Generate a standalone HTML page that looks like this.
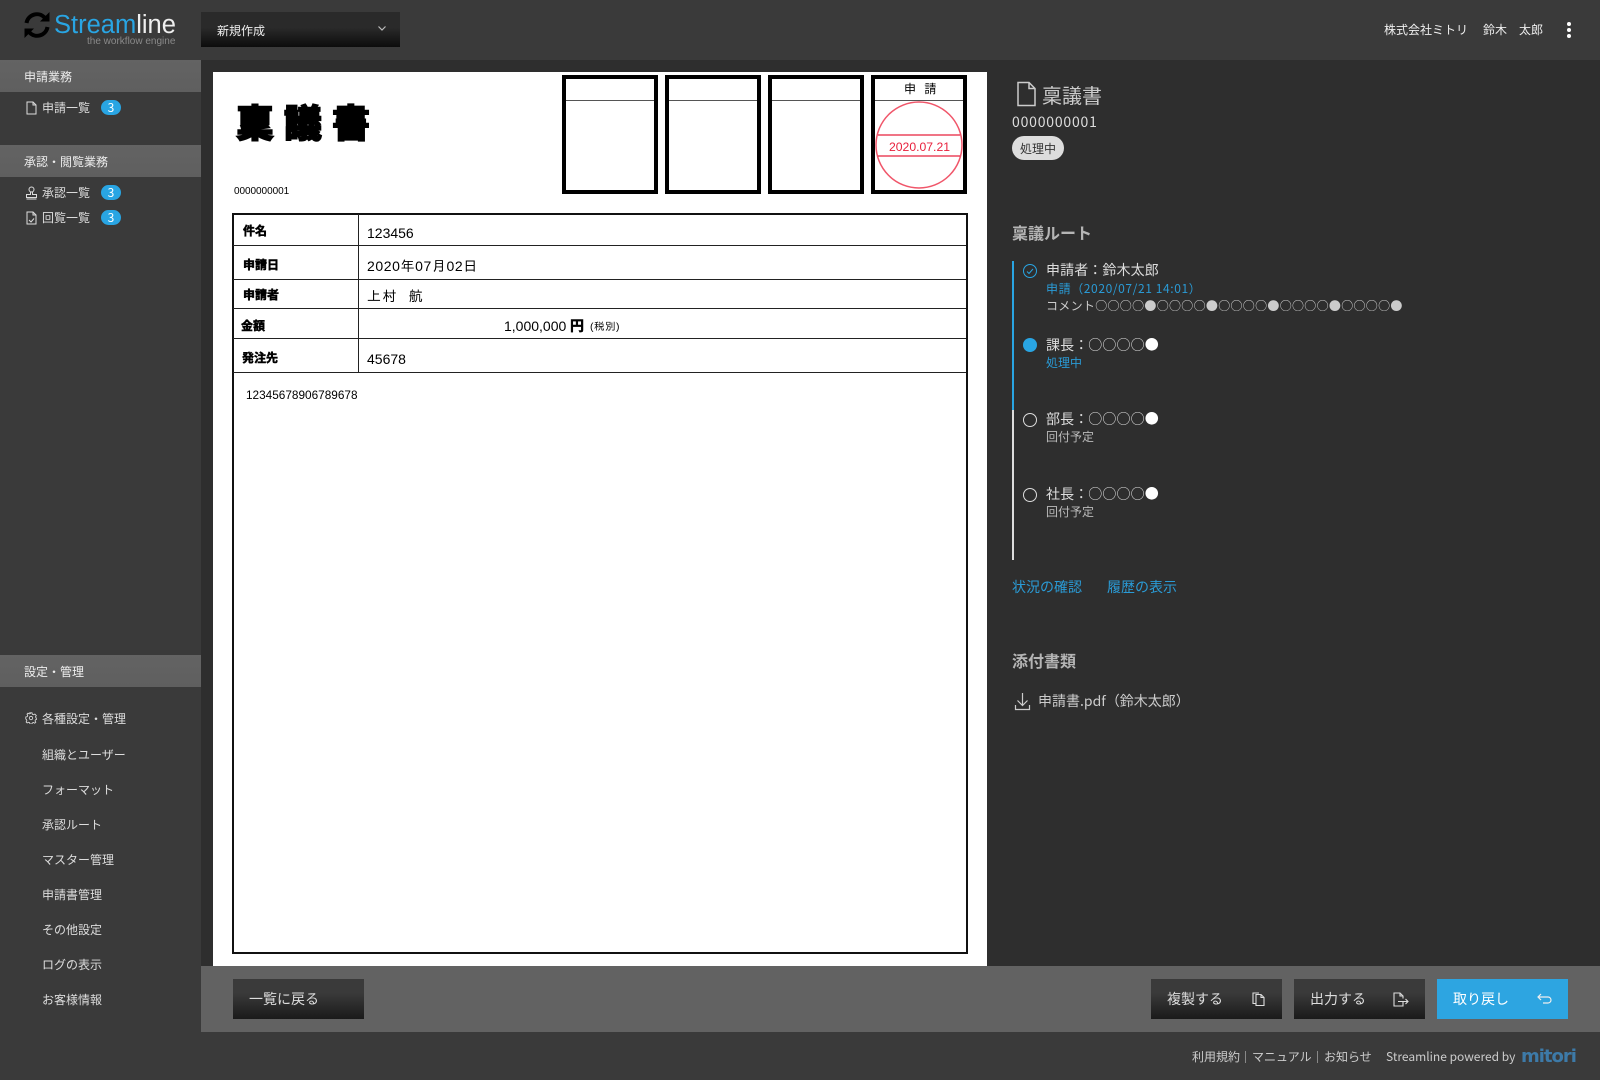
<!DOCTYPE html>
<html lang="ja"><head><meta charset="utf-8"><title>稟議書</title>
<style>
html,body{margin:0;padding:0;width:1600px;height:1080px;overflow:hidden;background:#2e2e2e}
body{position:relative;font-family:"Liberation Sans","Noto Sans CJK JP",sans-serif;color:#ddd}
.a{position:absolute}
.t{position:absolute;white-space:nowrap;line-height:20px;font-family:"Noto Sans CJK JP",sans-serif;font-size:12px}
.sec{position:absolute;left:0;width:201px;height:32px;background:linear-gradient(#636363,#5f5f5f)}
.bd{position:absolute;left:101px;width:20px;height:15px;border-radius:8px;background:#29a5e3;color:#fff;font:12px/15px "Noto Sans CJK JP",sans-serif;text-align:center}
.btn{position:absolute;top:979px;width:131px;height:40px;background:linear-gradient(#3a3a3a 35%,#1a1a1a);color:#ddd}
.btn span{position:absolute;left:16px;top:10px;font:14px/20px "Noto Sans CJK JP",sans-serif;white-space:nowrap}
.d{position:absolute;white-space:nowrap;line-height:20px;color:#000;font-family:"Liberation Sans","IPAGothic",sans-serif;font-size:14px}
.dj{font-family:"Noto Sans CJK JP",sans-serif;font-weight:700;font-size:12px;-webkit-text-stroke:.5px #000}
.st{position:absolute;top:75px;width:88px;height:111px;border:4px solid #000;background:#fff}
.st i{position:absolute;left:0;right:0;top:21px;height:1px;background:#555}
.hl{position:absolute;left:233px;width:733px;height:1px;background:#222}
b{font-weight:400;color:#fff}
</style></head><body>
<!-- header / sidebar / footer -->
<div class="a" style="left:0;top:0;width:1600px;height:60px;background:#3a3a3a"></div>
<div class="a" style="left:0;top:60px;width:201px;height:1020px;background:#3a3a3a"></div>
<div class="a" style="left:0;top:1032px;width:1600px;height:48px;background:#3a3a3a"></div>

<!-- logo -->
<svg class="a" style="left:23px;top:11px" width="28" height="28" viewBox="0 0 28 28" fill="none">
<path d="M3.500 12A10.500 10.500 0 0 1 21.500 6.500" stroke="#000" stroke-width="4"/><path d="M17 10.500h9.500V1z" fill="#000"/>
<path d="M24.500 16A10.500 10.500 0 0 1 6.500 21.500" stroke="#000" stroke-width="4"/><path d="M11 17.500H1.500V27z" fill="#000"/></svg>
<div class="a" style="left:54px;top:10px;font:300 25.500px/30px 'Liberation Sans',sans-serif;white-space:nowrap;color:#29a5e3">Stream<span style="color:#eee">line</span></div>
<div class="a" style="left:87px;top:36px;font:10px/12px 'Liberation Sans',sans-serif;white-space:nowrap;color:#8a8a8a">the workflow engine</div>

<!-- dropdown -->
<div class="a" style="left:201px;top:12px;width:199px;height:35px;background:linear-gradient(#2a2a2a 45%,#0c0c0c)"></div>
<div class="t" style="left:217px;top:21px;color:#eee">新規作成</div>
<svg class="a" style="left:377px;top:25px" width="10" height="8"><path d="M1.500 1.500L5 5l3.500-3.500" stroke="#bbb" fill="none" stroke-width="1.200"/></svg>

<!-- header right -->
<div class="t" style="left:1384px;top:20px;color:#eee">株式会社ミトリ</div>
<div class="t" style="left:1483px;top:20px;color:#eee">鈴木</div>
<div class="t" style="left:1519px;top:20px;color:#eee">太郎</div>
<svg class="a" style="left:1565px;top:21px" width="8" height="18" fill="#fff"><circle cx="4" cy="3" r="2"/><circle cx="4" cy="9" r="2"/><circle cx="4" cy="15" r="2"/></svg>

<!-- sidebar -->
<div class="sec" style="top:60px"></div><div class="t" style="left:24px;top:67px;color:#eee">申請業務</div>
<svg class="a" style="left:26px;top:101px" width="11" height="14" fill="none" stroke="#ddd"><path d="M1 1h6l3 3v9H1zM7 1v3h3"/></svg>
<div class="t" style="left:42px;top:98px">申請一覧</div><div class="bd" style="top:100px">3</div>
<div class="sec" style="top:145px"></div><div class="t" style="left:24px;top:152px;color:#eee">承認・閲覧業務</div>
<svg class="a" style="left:25px;top:186px" width="13" height="14" fill="none" stroke="#ddd"><circle cx="6.500" cy="3.500" r="2.500"/><path d="M5.500 6v2.500H1.500v3h10v-3h-4V6M1.500 13h10"/></svg>
<div class="t" style="left:42px;top:183px">承認一覧</div><div class="bd" style="top:185px">3</div>
<svg class="a" style="left:26px;top:211px" width="11" height="14" fill="none" stroke="#ddd"><path d="M1 1h6l3 3v9H1zM7 1v3h3M3 9l2 2 3-3.500"/></svg>
<div class="t" style="left:42px;top:208px">回覧一覧</div><div class="bd" style="top:210px">3</div>
<div class="sec" style="top:655px"></div><div class="t" style="left:24px;top:662px;color:#eee">設定・管理</div>
<svg class="a" style="left:25px;top:712px" width="12" height="12" viewBox="0 0 14 14" fill="none" stroke="#ddd"><circle cx="7" cy="7" r="2"/><path d="M5.800 1h2.400l.4 1.700 1.400.6 1.500-.9 1.700 1.700-.9 1.500.6 1.400 1.100.4v1.200l-1.700.4-.6 1.400.9 1.500-1.200 1.200-1.500-.9-1.400.6-.4 1.200H5.800l-.4-1.500-1.400-.6-1.500.9-1.200-1.200.9-1.500-.6-1.400L.9 8.200V5.800l1.700-.4.600-1.400-.9-1.500 1.200-1.200 1.500.9 1.400-.6z" stroke-width="1"/></svg>
<div class="t" style="left:42px;top:709px">各種設定・管理</div>
<div class="t" style="left:42px;top:745px">組織とユーザー</div>
<div class="t" style="left:42px;top:780px">フォーマット</div>
<div class="t" style="left:42px;top:815px">承認ルート</div>
<div class="t" style="left:42px;top:850px">マスター管理</div>
<div class="t" style="left:42px;top:885px">申請書管理</div>
<div class="t" style="left:42px;top:920px">その他設定</div>
<div class="t" style="left:42px;top:955px">ログの表示</div>
<div class="t" style="left:42px;top:990px">お客様情報</div>

<!-- document -->
<div class="a" style="left:213px;top:72px;width:774px;height:894px;background:#fff"></div>
<div class="d dj" style="left:236px;top:96px;font-size:38px;line-height:50px;letter-spacing:10px;font-weight:900;-webkit-text-stroke:1.500px #000">稟議書</div>
<div class="d" style="left:234px;top:182px;font-size:10px;letter-spacing:-.05px">0000000001</div>

<div class="st" style="left:562px"><i></i></div>
<div class="st" style="left:665px"><i></i></div>
<div class="st" style="left:768px"><i></i></div>
<div class="st" style="left:871px"><i></i></div>
<div class="d" style="left:904px;top:79px;font-size:12px;font-family:'Noto Sans CJK JP',sans-serif;letter-spacing:1px">申&nbsp;&nbsp;請</div>
<svg class="a" style="left:872px;top:98px" width="95" height="95" fill="none" stroke="#f0566a" stroke-width="1.500"><circle cx="47" cy="47" r="43"/><path d="M6 37h82M6 58h82" stroke="#e8203c" stroke-width="1.200"/></svg>
<div class="d" style="left:889px;top:137px;font-size:12.200px;color:#e8203c">2020.07.21</div>

<!-- table -->
<div class="a" style="left:232px;top:213px;width:732px;height:737px;border:2px solid #111;background:transparent"></div>
<div class="hl" style="top:245px"></div><div class="hl" style="top:279px"></div><div class="hl" style="top:308px"></div><div class="hl" style="top:338px"></div><div class="hl" style="top:372px"></div>
<div class="a" style="left:358px;top:214px;width:1px;height:158px;background:#222"></div>
<div class="d dj" style="left:243px;top:221px">件名</div>
<div class="d dj" style="left:243px;top:255px">申請日</div>
<div class="d dj" style="left:243px;top:285px">申請者</div>
<div class="d dj" style="left:241px;top:316px">金額</div>
<div class="d dj" style="left:242px;top:348px">発注先</div>
<div class="d" style="left:367px;top:223px;font-size:14px">123456</div>
<div class="d" style="left:367px;top:256px;letter-spacing:.6px">2020年07月02日</div>
<div class="d" style="left:367px;top:286px;letter-spacing:1.500px">上村&nbsp;&nbsp;航</div>
<div class="d" style="left:504px;top:316px;font-size:14px">1,000,000</div>
<div class="d dj" style="left:570px;top:316px;font-size:14px">円</div>
<div class="d" style="left:590px;top:317px;font-size:10.500px;letter-spacing:.5px">(税別)</div>
<div class="d" style="left:367px;top:349px">45678</div>
<div class="d" style="left:246px;top:385px;font-size:11.800px">12345678906789678</div>

<!-- right panel -->
<svg class="a" style="left:1016px;top:81px" width="21" height="26" fill="none" stroke="#ccc" stroke-width="1.500"><path d="M2 1.500h11l6 6v17H2zM13 1.500v6h6"/></svg>
<div class="t" style="left:1042px;top:85px;font-size:20px;color:#ccc">稟議書</div>
<div class="t" style="left:1012px;top:112px;font-size:14px;letter-spacing:.8px;color:#ddd">0000000001</div>
<div class="a" style="left:1012px;top:136px;width:52px;height:24px;border-radius:12px;background:#ddd;color:#333;font:12px/25px 'Noto Sans CJK JP',sans-serif;text-align:center">処理中</div>
<div class="t" style="left:1012px;top:222px;font-size:16px;font-weight:700;color:#b5b5b5">稟議ルート</div>
<div class="a" style="left:1012px;top:261px;width:2px;height:149px;background:#29a5e3"></div>
<div class="a" style="left:1012px;top:410px;width:2px;height:150px;background:#ddd"></div>

<svg class="a" style="left:1022px;top:263px" width="16" height="16" fill="none" stroke="#29a5e3"><circle cx="8" cy="8" r="6.500"/><path d="M5 8.500l2 2 4-4.500"/></svg>
<div class="t" style="left:1046px;top:260px;font-size:14px;letter-spacing:.1px;color:#ddd">申請者：鈴木太郎</div>
<div class="t" style="left:1046px;top:279px;letter-spacing:.6px;color:#2a9bd6">申請（2020/07/21 14:01）</div>
<div class="t" style="left:1046px;top:296px;letter-spacing:.3px;color:#ccc">コメント○○○○●○○○○●○○○○●○○○○●○○○○●</div>

<div class="a" style="left:1023px;top:338px;width:14px;height:14px;border-radius:50%;background:#29a5e3"></div>
<div class="t" style="left:1046px;top:335px;font-size:14px;letter-spacing:.1px;color:#ddd">課長：○○○○<b>●</b></div>
<div class="t" style="left:1046px;top:353px;color:#2a9bd6">処理中</div>

<div class="a" style="left:1023px;top:413px;width:12px;height:12px;border:1px solid #ddd;border-radius:50%"></div>
<div class="t" style="left:1046px;top:409px;font-size:14px;letter-spacing:.1px;color:#ddd">部長：○○○○<b>●</b></div>
<div class="t" style="left:1046px;top:427px;color:#bbb">回付予定</div>

<div class="a" style="left:1023px;top:488px;width:12px;height:12px;border:1px solid #ddd;border-radius:50%"></div>
<div class="t" style="left:1046px;top:484px;font-size:14px;letter-spacing:.1px;color:#ddd">社長：○○○○<b>●</b></div>
<div class="t" style="left:1046px;top:502px;color:#bbb">回付予定</div>

<div class="t" style="left:1012px;top:577px;font-size:14px;color:#2a9bd6">状況の確認</div>
<div class="t" style="left:1107px;top:577px;font-size:14px;color:#2a9bd6">履歴の表示</div>
<div class="t" style="left:1012px;top:650px;font-size:16px;font-weight:700;color:#b5b5b5">添付書類</div>
<svg class="a" style="left:1014px;top:691px" width="17" height="20" fill="none" stroke="#ccc" stroke-width="1.200"><path d="M8.500 2v12M3.500 9.500l5 5 5-5M1.500 14v4.500h14V14"/></svg>
<div class="t" style="left:1038px;top:691px;font-size:14px;color:#ccc">申請書.pdf（鈴木太郎）</div>

<!-- bottom bar -->
<div class="a" style="left:201px;top:966px;width:1399px;height:66px;background:#626262"></div>
<div class="btn" style="left:233px"><span>一覧に戻る</span></div>
<div class="btn" style="left:1151px"><span>複製する</span>
<svg class="a" style="left:100px;top:13px" width="14" height="15" fill="none" stroke="#ddd" stroke-width="1.100"><path d="M5 13.500h8V5.500L10 2.500H5zM10 2.500v3h3M5 11.500H2V1H8"/></svg></div>
<div class="btn" style="left:1294px"><span>出力する</span>
<svg class="a" style="left:99px;top:13px" width="16" height="15" fill="none" stroke="#ddd" stroke-width="1.100"><path d="M10 9.500V14H1V1h6l3 3v2.500M7 1v3h3M5 9.500h10M12.500 7l2.500 2.500-2.500 2.500"/></svg></div>
<div class="a" style="left:1437px;top:979px;width:131px;height:40px;background:#2da5e1"><span class="t" style="left:16px;top:10px;font-size:14px;color:#fff">取り戻し</span>
<svg class="a" style="left:100px;top:14px" width="16" height="12" fill="none" stroke="#eee" stroke-width="1.200"><path d="M4 1L1 4l3 3M1 4h10a3 3 0 0 1 0 6H6"/></svg></div>

<!-- footer -->
<div class="t" style="left:1192px;top:1047px;color:#ccc">利用規約</div>
<div class="a" style="left:1245px;top:1051px;width:1px;height:12px;background:#888"></div>
<div class="t" style="left:1252px;top:1047px;color:#ccc">マニュアル</div>
<div class="a" style="left:1317px;top:1051px;width:1px;height:12px;background:#888"></div>
<div class="t" style="left:1324px;top:1047px;color:#ccc">お知らせ</div>
<div class="t" style="left:1386px;top:1047px;color:#ccc">Streamline powered by</div>
<div class="a" style="left:1521px;top:1045px;font:700 18px/24px 'DejaVu Sans',sans-serif;letter-spacing:-1px;color:#3d7aa8;white-space:nowrap">mitori</div>
</body></html>
